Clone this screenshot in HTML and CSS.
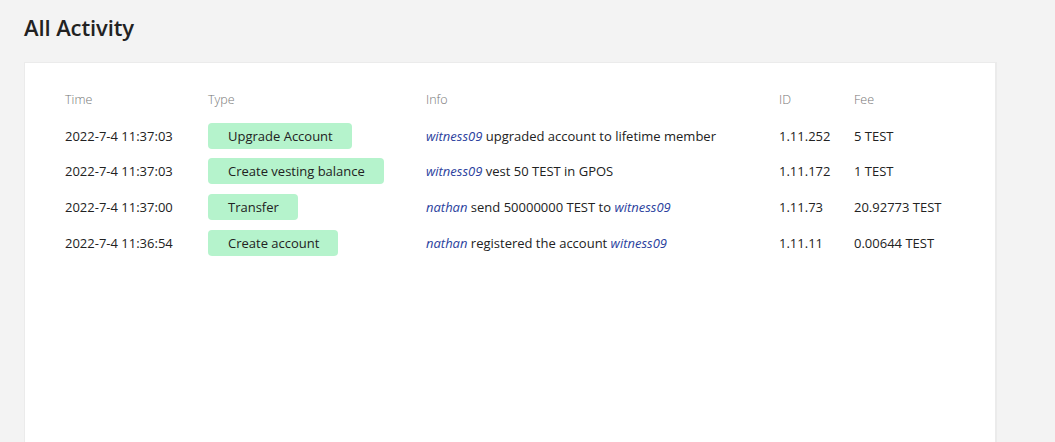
FILE: index.html
```html
<!DOCTYPE html>
<html>
<head>
<meta charset="utf-8">
<link rel="stylesheet" href="styles.css">
</head>
<body>
<h1 class="title">All Activity</h1>
<div class="card">
  <div class="table">
    <div class="th">Time</div>
    <div class="th">Type</div>
    <div class="th">Info</div>
    <div class="th">ID</div>
    <div class="th">Fee</div>

    <div class="td">2022-7-4 11:37:03</div>
    <div class="td"><span class="badge">Upgrade Account</span></div>
    <div class="td"><a class="acct">witness09</a> upgraded account to lifetime member</div>
    <div class="td">1.11.252</div>
    <div class="td">5 TEST</div>

    <div class="td">2022-7-4 11:37:03</div>
    <div class="td"><span class="badge">Create vesting balance</span></div>
    <div class="td"><a class="acct">witness09</a> vest 50 TEST in GPOS</div>
    <div class="td">1.11.172</div>
    <div class="td">1 TEST</div>

    <div class="td">2022-7-4 11:37:00</div>
    <div class="td"><span class="badge">Transfer</span></div>
    <div class="td"><a class="acct">nathan</a> send 50000000 TEST to <a class="acct">witness09</a></div>
    <div class="td">1.11.73</div>
    <div class="td">20.92773 TEST</div>

    <div class="td">2022-7-4 11:36:54</div>
    <div class="td"><span class="badge">Create account</span></div>
    <div class="td"><a class="acct">nathan</a> registered the account <a class="acct">witness09</a></div>
    <div class="td">1.11.11</div>
    <div class="td">0.00644 TEST</div>
  </div>
</div>
</body>
</html>
```
FILE: styles.css
```css
html, body {
  margin: 0;
  padding: 0;
  background: #f3f3f3;
  font-family: "Open Sans", "Noto Sans", sans-serif;
  color: #222;
  overflow: hidden;
}
body {
  padding: 0 24px;
}
.title {
  margin: 0;
  padding-top: 12px;
  font-size: 22px;
  font-weight: 600;
  line-height: 30px;
  color: #222;
  height: 50px;
  letter-spacing: -0.1px;
}
.card {
  width: 970px;
  min-height: 420px;
  background: #fff;
  border: 1px solid #ebebeb;
  border-right-width: 2px;
  box-sizing: content-box;
}
.table {
  display: grid;
  grid-template-columns: 143px 218px 353px 75px auto;
  grid-auto-rows: 26px;
  row-gap: 9.67px;
  padding: 24px 0 0 40px;
  font-size: 13px;
}
.th, .td {
  display: block;
  line-height: 26px;
  white-space: nowrap;
}
.th {
  font-size: 12.5px;
  font-weight: 300;
  color: #777;
}
.td {
  color: #222;
}
.badge {
  display: inline-block;
  vertical-align: top;
  background: #b5f3cc;
  border-radius: 4px;
  padding: 0 19px 0 20px;
  line-height: 26px;
  height: 26px;
}
.acct {
  font-style: italic;
  color: #2b3f9e;
}
```
